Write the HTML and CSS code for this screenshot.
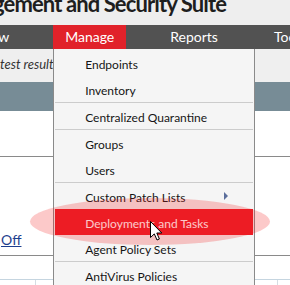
FILE: index.html
```html
<!DOCTYPE html>
<html lang="en">
<head>
  <meta charset="UTF-8">
  <title>Endpoint Management and Security Suite</title>
  <link rel="stylesheet" href="styles.css">
</head>
<body>
  <header class="masthead">
    <h1 class="product-title">Endpoint Management and Security Suite</h1>
  </header>

  <nav class="main-nav">
    <ul class="nav-list">
      <li class="nav-item">View</li>
      <li class="nav-item is-open">Manage
        <ul class="dropdown">
          <li class="menu-item">Endpoints</li>
          <li class="menu-item">Inventory</li>
          <li class="menu-item group-start">Centralized Quarantine</li>
          <li class="menu-item group-start">Groups</li>
          <li class="menu-item">Users</li>
          <li class="menu-item group-start has-sub">Custom Patch Lists</li>
          <li class="menu-item is-active">Deployments and Tasks</li>
          <li class="menu-item">Agent Policy Sets</li>
          <li class="menu-item group-start">AntiVirus Policies</li>
        </ul>
      </li>
      <li class="nav-item">Reports</li>
      <li class="nav-item">Tools</li>
    </ul>
  </nav>

  <main class="page">
    <div class="toolbar"><span class="status-note">test results for the selected group</span></div>
    <div class="band"></div>
    <div class="summary"></div>
    <div class="toggles"><a class="toggle-link" href="#">Off</a></div>
    <div class="grid">
      <div class="grid-cell first"></div>
      <div class="grid-cell wide"></div>
      <div class="grid-cell"></div>
    </div>
  </main>

  <!-- callout highlight and pointer drawn over the menu -->
  <div class="highlight"></div>
  <svg class="pointer" width="13" height="20" viewBox="0 0 13 20">
    <path d="M0.5 0.5 L0.5 16.5 L4.3 12.9 L7 19 L9.4 18 L6.8 12 L11.8 12 Z" fill="#fff" stroke="#000" stroke-width="1" stroke-linejoin="miter"/>
  </svg>
</body>
</html>
```

FILE: styles.css
```css
html, body {
  margin: 0;
  padding: 0;
  background: #ffffff;
  height: 100%;
  overflow: hidden;
  font-family: Lato, 'Liberation Sans', sans-serif;
}
.masthead {
  box-sizing: border-box;
  height: 25px;
  display: flex;
  align-items: flex-end;
  justify-content: flex-end;
  padding: 0 64px 10px 0;
  overflow: hidden;
  background: #eeeeee;
}
.product-title {
  margin: 0;
  font-size: 22px;
  font-weight: 700;
  line-height: 22px;
  letter-spacing: -0.9px;
  white-space: nowrap;
  color: #1e1e1e;
}
.main-nav {
  position: relative;
  z-index: 2;
  height: 24px;
  background: #525252;
}
.nav-list {
  display: flex;
  gap: 32px;
  margin: 0 0 0 -34px;
  padding: 0;
  list-style: none;
}
.nav-item {
  position: relative;
  padding: 0 12px;
  font-size: 14px;
  line-height: 24px;
  color: #ffffff;
  white-space: nowrap;
}
.nav-item.is-open {
  background: #e1222a;
}
.dropdown {
  position: absolute;
  top: 100%;
  left: 0;
  box-sizing: border-box;
  width: 202px;
  margin: 0;
  padding: 1px 1px 0;
  list-style: none;
  background: #f5f5f5;
  border: 1px solid #8a8a8a;
  border-top: none;
}
.menu-item {
  position: relative;
  height: 26px;
  box-sizing: border-box;
  padding: 3px 0 0 30px;
  font-size: 12px;
  line-height: 23px;
  color: #151515;
}
.menu-item.group-start {
  border-top: 1px solid #cccccc;
  height: 27px;
}
.menu-item.has-sub::after {
  content: '';
  position: absolute;
  right: 25px;
  top: 9px;
  border-left: 4px solid #5b6e9b;
  border-top: 4px solid transparent;
  border-bottom: 4px solid transparent;
}
.menu-item.is-active {
  background: #ec1e29;
  color: #ffffff;
}
.toolbar {
  box-sizing: border-box;
  height: 33px;
  padding-top: 4px;
  background: #efefef;
}
.status-note {
  font-size: 13px;
  font-style: italic;
  line-height: 20px;
  color: #333333;
  white-space: nowrap;
}
.band {
  height: 29px;
  background: #778c96;
}
.summary {
  box-sizing: border-box;
  height: 46px;
  border-bottom: 1px solid #8a8a8a;
}
.toggles {
  box-sizing: border-box;
  height: 99px;
  display: flex;
  flex-direction: column;
  justify-content: flex-end;
  padding: 0 0 7px 1px;
  border-bottom: 1px solid #8a8a8a;
}
.toggle-link {
  font-size: 14px;
  line-height: 16px;
  color: #1d3e8e;
}
.grid {
  display: flex;
  height: 10px;
  margin-top: 23px;
  border-top: 1px solid #c5d5e0;
}
.grid-cell {
  flex: 0 0 auto;
  width: 35px;
  border-right: 1px solid #d5dde3;
}
.grid-cell.wide {
  width: 241px;
}
.grid-cell:last-child {
  flex: 1;
  border-right: none;
}
.highlight {
  position: absolute;
  left: 30px;
  top: 198px;
  width: 240px;
  height: 47px;
  border-radius: 50%;
  background: rgba(240, 20, 20, 0.23);
  z-index: 3;
  pointer-events: none;
}
.pointer {
  position: absolute;
  left: 150px;
  top: 221px;
  z-index: 4;
}
```
